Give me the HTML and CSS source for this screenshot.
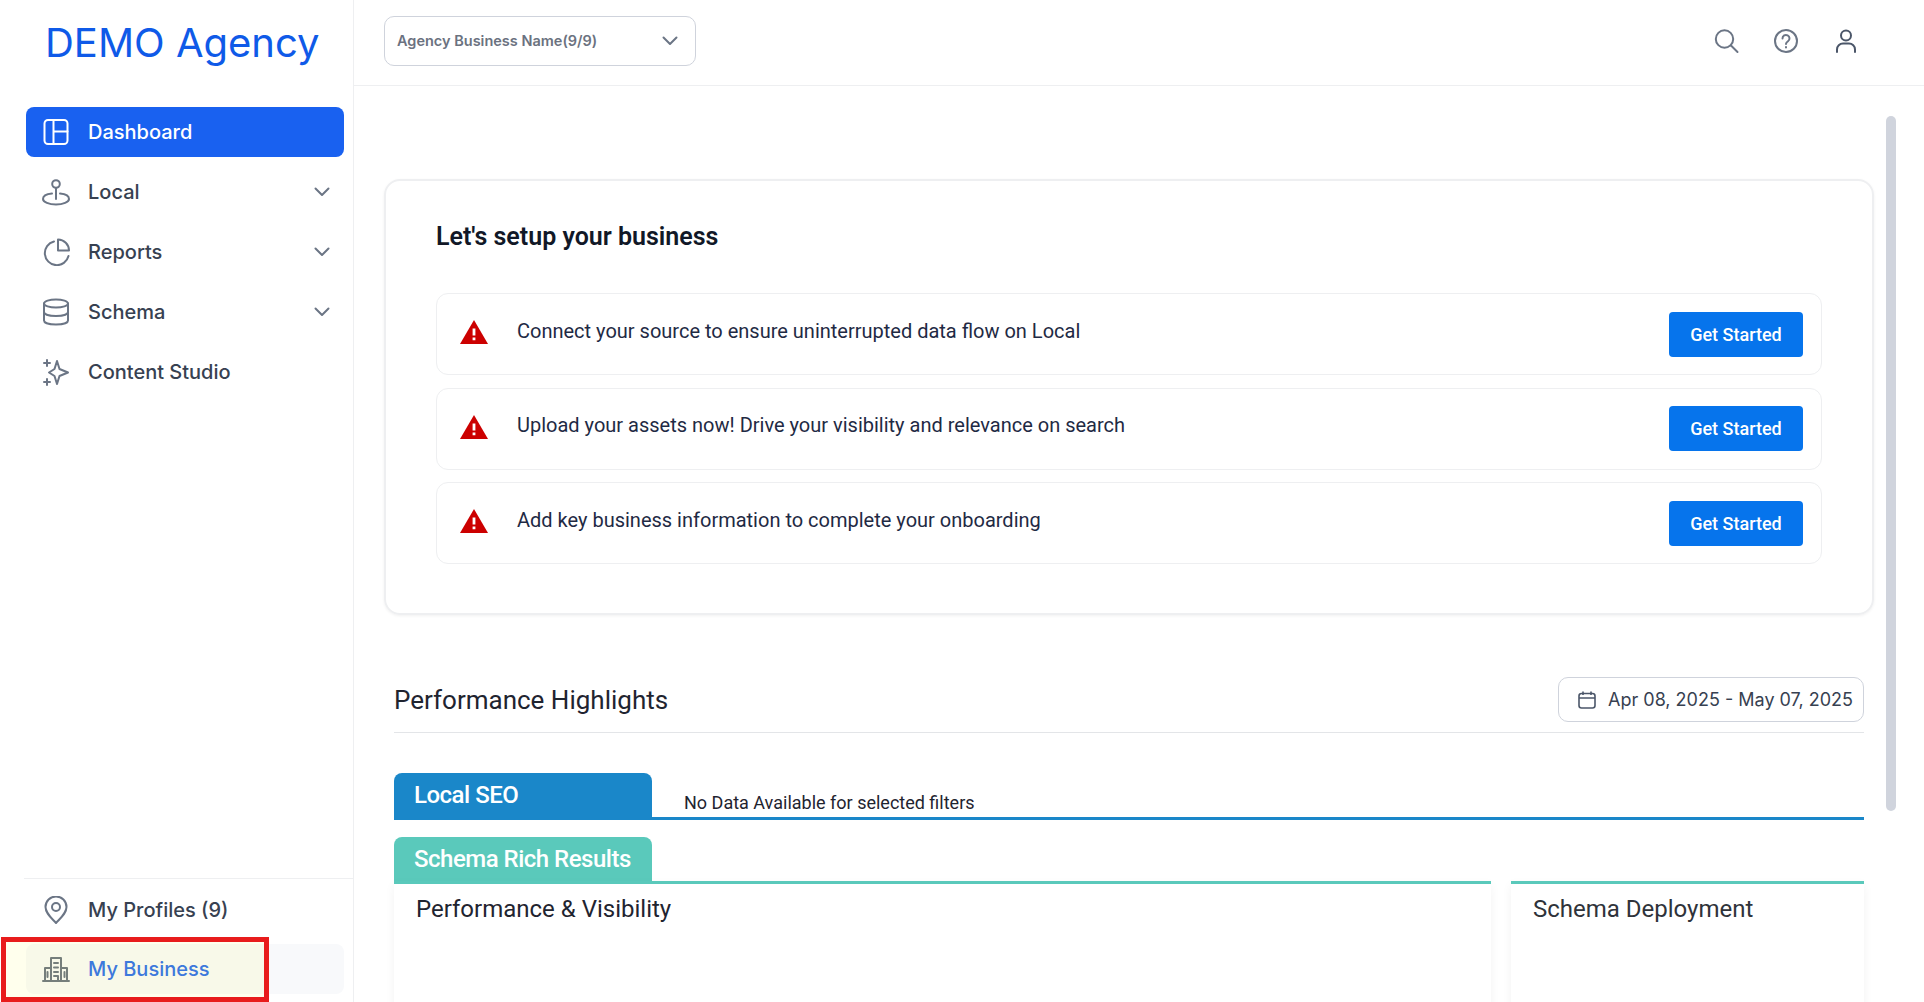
FILE: index.html
```html
<!DOCTYPE html>
<html>
<head>
    <meta charset="UTF-8">
    <meta name="viewport" content="width=device-width, initial-scale=1.0">
    <title>Dashboard</title>
    <link rel="stylesheet" href="styles.css">
</head>
<body>
    <div class="app">
        <aside class="sidebar">
            <div class="logo">DEMO Agency</div>
            <nav class="nav">
                <a class="nav-item active">
                    <svg class="nav-icon" viewBox="0 0 28 28"><rect x="2.5" y="2" width="23" height="24" rx="3.5"/><path d="M11.5 2v24M11.5 13.5h14"/></svg>
                    <span>Dashboard</span>
                </a>
                <a class="nav-item">
                    <svg class="nav-icon" viewBox="0 0 28 28"><circle cx="14" cy="6" r="3.8"/><path d="M14 10v11M10 15.5C5 16 1 18 1 21c0 3 6 5.5 13 5.5S27 24 27 21c0-3-4-5-9-5.500"/></svg>
                    <span>Local</span>
                    <svg class="chevron" viewBox="0 0 16 10"><path d="M1.500 1.500 8 8l6.500-6.500"/></svg>
                </a>
                <a class="nav-item">
                    <svg class="nav-icon" viewBox="0 0 28 28"><path d="M12 3.500A12 12 0 1 0 26.500 18"/><path d="M16 1.500A11 11 0 0 1 27 12.500H16z"/></svg>
                    <span>Reports</span>
                    <svg class="chevron" viewBox="0 0 16 10"><path d="M1.500 1.500 8 8l6.500-6.500"/></svg>
                </a>
                <a class="nav-item">
                    <svg class="nav-icon" viewBox="0 0 28 28"><ellipse cx="14" cy="5.500" rx="12" ry="4"/><path d="M2 5.500v17c0 2.500 5.500 4 12 4s12-1.500 12-4v-17M2 14c0 2.500 5.500 4 12 4s12-1.500 12-4"/></svg>
                    <span>Schema</span>
                    <svg class="chevron" viewBox="0 0 16 10"><path d="M1.500 1.500 8 8l6.500-6.500"/></svg>
                </a>
                <a class="nav-item">
                    <svg class="nav-icon" viewBox="0 0 28 28"><path d="M15 3l2.500 8 8.500 3.500-8.500 3.500L15 26l-2.500-8L7 14.500l5.500-3.500z"/><path d="M5 2v6M2 5h6M5 21v6M2 24h6"/></svg>
                    <span>Content Studio</span>
                </a>
            </nav>
            <div class="nav-bottom">
                <a class="nav-item">
                    <svg class="nav-icon" viewBox="0 0 28 28"><path d="M14 27C9 21.500 3.500 17 3.500 11a10.500 10.500 0 0 1 21 0C24.500 17 19 21.500 14 27z"/><circle cx="14" cy="11" r="4"/></svg>
                    <span>My Profiles (9)</span>
                </a>
                <a class="nav-item current">
                    <svg class="nav-icon" viewBox="0 0 28 28"><path d="M1 26h26M3 26V13h6M25 26V13h-6M9 26V3h10v23M12 8h4M12 12.500h4M12 17h4M5.500 17v5M22.500 17v5M12 21h4v5"/></svg>
                    <span>My Business</span>
                </a>
            </div>
            <div class="callout"></div>
        </aside>

        <main class="main">
            <header class="topbar">
                <div class="select">
                    <span>Agency Business Name(9/9)</span>
                    <svg class="chevron" viewBox="0 0 16 10"><path d="M1.500 1.500 8 8l6.500-6.500"/></svg>
                </div>
                <div class="top-icons">
                    <svg class="top-icon" viewBox="0 0 28 28"><circle cx="12.500" cy="12" r="8.700"/><path d="M19 18.500l6.500 6.500"/></svg>
                    <svg class="top-icon" viewBox="0 0 28 28"><circle cx="14" cy="14" r="11"/><path d="M10.500 11.500a3.500 3.500 0 1 1 5.500 2.800c-1.200.8-2 1.400-2 2.700M14 20v.6"/></svg>
                    <svg class="top-icon dark" viewBox="0 0 28 28"><circle cx="14" cy="8.500" r="5"/><path d="M5 25v-2.500a6 6 0 0 1 6-6h6a6 6 0 0 1 6 6V25"/></svg>
                </div>
            </header>

            <div class="content">
                <section class="setup">
                    <h2 class="setup-title">Let's setup your business</h2>
                    <div class="setup-row">
                        <svg class="warn" viewBox="0 0 28 24"><path class="warn-bg" d="M14 0l14 24H0z"/><path class="warn-mark" d="M12.600 8.500h2.800v7h-2.800zM12.600 17.500h2.800v2.800h-2.800z"/></svg>
                        <p class="setup-text">Connect your source to ensure uninterrupted data flow on Local</p>
                        <button class="btn">Get Started</button>
                    </div>
                    <div class="setup-row">
                        <svg class="warn" viewBox="0 0 28 24"><path class="warn-bg" d="M14 0l14 24H0z"/><path class="warn-mark" d="M12.600 8.500h2.800v7h-2.800zM12.600 17.500h2.800v2.800h-2.800z"/></svg>
                        <p class="setup-text">Upload your assets now! Drive your visibility and relevance on search</p>
                        <button class="btn">Get Started</button>
                    </div>
                    <div class="setup-row">
                        <svg class="warn" viewBox="0 0 28 24"><path class="warn-bg" d="M14 0l14 24H0z"/><path class="warn-mark" d="M12.600 8.500h2.800v7h-2.800zM12.600 17.500h2.800v2.800h-2.800z"/></svg>
                        <p class="setup-text">Add key business information to complete your onboarding</p>
                        <button class="btn">Get Started</button>
                    </div>
                </section>

                <section class="perf">
                    <div class="perf-head">
                        <h2 class="perf-title">Performance Highlights</h2>
                        <div class="date">
                            <svg class="date-icon" viewBox="0 0 18 18"><rect x="1" y="2.500" width="16" height="14.500" rx="2.500"/><path d="M1 7h16M5 .5v3.500M13 .5v3.500"/></svg>
                            <span>Apr 08, 2025 - May 07, 2025</span>
                        </div>
                    </div>

                    <div class="local-row">
                        <div class="tab tab-local">Local SEO</div>
                        <span class="no-data">No Data Available for selected filters</span>
                    </div>

                    <div class="tab tab-schema">Schema Rich Results</div>
                    <div class="schema-grid">
                        <div class="panel">Performance &amp; Visibility</div>
                        <div class="panel panel-dark">Schema Deployment</div>
                    </div>
                </section>
            </div>
            <div class="scroll-thumb"></div>
        </main>
    </div>
</body>
</html>
```

FILE: styles.css
```css
* {
    padding: 0;
    margin: 0;
    box-sizing: border-box;
}
html, body {
    height: 100%;
    overflow: hidden;
    background: #fff;
}
.app {
    display: flex;
    height: 1002px;
    font-family: Inter, "Liberation Sans", sans-serif;
}

/* sidebar */
.sidebar {
    position: relative;
    flex: 0 0 354px;
    display: flex;
    flex-direction: column;
    border-right: 1px solid #eeeff1;
}
.logo {
    height: 107px;
    padding: 20px 0 0 45px;
    color: #0f5ae8;
    font-size: 40px;
    line-height: 46px;
    white-space: nowrap;
}
.nav {
    flex: 1;
    display: flex;
    flex-direction: column;
    gap: 10px;
    padding: 0 9px 0 26px;
}
.nav-item {
    display: flex;
    align-items: center;
    height: 50px;
    padding: 0 14px 0 16px;
    border-radius: 8px;
    color: #374151;
    font-size: 20px;
    font-weight: 500;
}
.nav-item span {
    flex: 1;
    margin-left: 18px;
}
.nav-item.active {
    background: #1961f0;
    color: #fff;
}
.nav-item.current {
    background: #f8f9fb;
    color: #2f6fed;
}
.nav-icon {
    flex: 0 0 28px;
    width: 28px;
    height: 28px;
    fill: none;
    stroke: #6b7585;
    stroke-width: 2;
    stroke-linecap: round;
    stroke-linejoin: round;
}
.active .nav-icon {
    stroke: #fff;
}
.chevron {
    flex: 0 0 16px;
    width: 16px;
    height: 10px;
    fill: none;
    stroke: #6b7585;
    stroke-width: 2;
    stroke-linecap: round;
    stroke-linejoin: round;
}
.nav-bottom {
    display: flex;
    flex-direction: column;
    gap: 9px;
    margin-left: 24px;
    padding: 6px 9px 8px 2px;
    border-top: 1px solid #eeeff1;
}
.callout {
    position: absolute;
    left: 1px;
    top: 937px;
    width: 268px;
    height: 65px;
    border: 5px solid #e81c1c;
    background: rgba(255, 255, 0, .07);
}

/* top bar */
.main {
    position: relative;
    flex: 1;
    min-width: 0;
    display: flex;
    flex-direction: column;
}
.topbar {
    flex: 0 0 86px;
    display: flex;
    align-items: center;
    justify-content: space-between;
    padding: 0 64px 4px 30px;
    border-bottom: 1px solid #eeeff1;
}
.select {
    display: flex;
    align-items: center;
    justify-content: space-between;
    width: 312px;
    height: 50px;
    padding: 0 17px 0 12px;
    border: 1px solid #cfd3dc;
    border-radius: 10px;
    color: #6b7280;
    font-size: 14.500px;
    font-weight: 600;
}
.top-icons {
    display: flex;
    gap: 32px;
}
.top-icon {
    width: 28px;
    height: 28px;
    fill: none;
    stroke: #6b7585;
    stroke-width: 2;
    stroke-linecap: round;
    stroke-linejoin: round;
}
.top-icon.dark {
    stroke: #4b5669;
}

/* content */
.content {
    flex: 1;
    overflow: hidden;
    padding: 93px 50px 0 30px;
    font-family: Roboto, "Liberation Sans", sans-serif;
}
.setup {
    height: 436px;
    padding: 41px 50px 0 50px;
    border: 2px solid #eeeff1;
    border-radius: 16px;
    box-shadow: 0 1px 3px rgba(0, 0, 0, .06);
}
.setup-title {
    height: 71px;
    color: #111827;
    font-size: 25px;
    font-weight: 600;
    line-height: 30px;
}
.setup-row {
    display: flex;
    align-items: center;
    height: 82px;
    margin-bottom: 12.500px;
    padding: 0 18px 0 23px;
    border: 1px solid #eeeff1;
    border-radius: 12px;
}
.warn {
    flex: 0 0 28px;
    width: 28px;
    height: 24px;
    margin-bottom: 4px;
}
.warn-bg {
    fill: #cc0000;
}
.warn-mark {
    fill: #fff;
}
.setup-text {
    flex: 1;
    margin: 0 0 7px 29px;
    color: #1f2a44;
    font-size: 20px;
}
.btn {
    width: 134px;
    height: 45px;
    border: 0;
    border-radius: 4px;
    background: #0674ec;
    color: #fff;
    font-family: Roboto, "Liberation Sans", sans-serif;
    font-size: 18px;
    font-weight: 500;
}

/* performance */
.perf {
    margin-top: 62px;
    padding: 0 10px;
}
.perf-head {
    display: flex;
    align-items: center;
    justify-content: space-between;
    padding-bottom: 10px;
    border-bottom: 1px solid #e3e5e8;
}
.perf-title {
    color: #1f2430;
    font-size: 26px;
    font-weight: 400;
}
.date {
    display: flex;
    align-items: center;
    gap: 12px;
    width: 306px;
    height: 45px;
    padding-left: 19px;
    border: 1px solid #cfd3dc;
    border-radius: 10px;
    color: #374151;
    font-family: Inter, "Liberation Sans", sans-serif;
    font-size: 18px;
}
.date-icon {
    width: 18px;
    height: 18px;
    fill: none;
    stroke: #4b5669;
    stroke-width: 1.600;
}
.local-row {
    display: flex;
    align-items: flex-end;
    margin-top: 40px;
    border-bottom: 3px solid #1a87c9;
}
.tab {
    display: flex;
    align-items: center;
    width: 258px;
    height: 44px;
    padding-left: 20px;
    border-radius: 8px 8px 0 0;
    color: #fff;
    font-size: 24px;
    font-weight: 500;
    letter-spacing: -.5px;
}
.tab-local {
    background: #1a87c9;
}
.no-data {
    margin: 0 0 4px 32px;
    color: #1f2430;
    font-size: 18px;
}
.tab-schema {
    margin-top: 17px;
    background: #5ac9bb;
}
.schema-grid {
    display: grid;
    grid-template-columns: 1097px 353px;
    gap: 20px;
}
.panel {
    height: 200px;
    padding: 11px 22px;
    border-top: 3px solid #5ac9bb;
    box-shadow: 0 4px 10px rgba(0, 0, 0, .05);
    color: #1f2430;
    font-size: 24px;
}
.panel-dark {
    color: #2f333a;
}
.scroll-thumb {
    position: absolute;
    left: 1532px;
    top: 116px;
    width: 10px;
    height: 695px;
    border-radius: 5px;
    background: #d0d4dd;
}
```
